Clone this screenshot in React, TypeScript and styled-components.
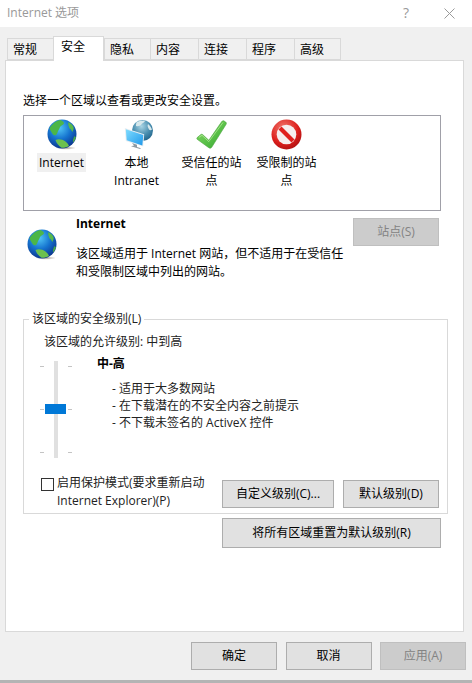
import React from 'react';
import styled, { createGlobalStyle } from 'styled-components';

const TABS = ['常规', '安全', '隐私', '内容', '连接', '程序', '高级'];
const TAB_WIDTHS = [46, 51, 46, 48, 48, 48, 47];

function GlobeIcon({ id, size = 32 }: { id: string; size?: number }) {
  return (
    <svg width={size} height={size} viewBox='0 0 32 32'>
      <defs>
        <radialGradient id={`${id}-sea`} cx='0.42' cy='0.3' r='0.75'>
          <stop offset='0' stopColor='#4fc4f5' />
          <stop offset='0.5' stopColor='#1573cf' />
          <stop offset='1' stopColor='#0a2f86' />
        </radialGradient>
        <radialGradient id={`${id}-shade`} cx='0.5' cy='0.5' r='0.5'>
          <stop offset='0' stopColor='#6b5a4a' stopOpacity='0.6' />
          <stop offset='1' stopColor='#6b5a4a' stopOpacity='0' />
        </radialGradient>
      </defs>
      <ellipse cx='20' cy='30' rx='10' ry='1.800' fill={`url(#${id}-shade)`} />
      <g transform='translate(0.5 1)'>
        <circle cx='15.500' cy='15' r='14.500' fill={`url(#${id}-sea)`} />
        <path d='M6 5.500C8 3 11 1.500 14 1c2 1 3.500 2 3.500 3.500-1 2-3 1.500-4 3.500-.5 2.500-2 3-2.500 5.500C10 16.500 8 17 6.500 15.500 5 13 3.500 11 3 9.500 3.500 8 5 6.500 6 5.500Z' fill='#4cb648' />
        <path d='M22 3c2.500 1.500 4 3 5 5 .5 2-.5 3.500-1 5-1-1-1.500-3-3-3.500-.5-2-2-4-1-6.500Z' fill='#58b84a' />
        <path d='M9 21c3-1.500 7-.5 10 1.500 2 1.500 3 3 3.500 4.500-2 1.200-5 2-7.500 1.800-2.500-2-5-4-6-7.800Z' fill='#6cc04e' />
        <path d='M28 17c.7 1 1 .8 1.500 1-.5 2-1.500 4-3 5.500-.5-2 .5-4.500 1.500-6.500Z' fill='#4aa848' />
      </g>
    </svg>
  );
}

function IntranetIcon() {
  return (
    <svg width={32} height={32} viewBox='0 0 32 32'>
      <defs>
        <radialGradient id='lan-globe' cx='0.45' cy='0.3' r='0.75'>
          <stop offset='0' stopColor='#a8d4e4' />
          <stop offset='0.55' stopColor='#4a8fb0' />
          <stop offset='1' stopColor='#1d5f86' />
        </radialGradient>
        <linearGradient id='lan-screen' x1='0' y1='0' x2='1' y2='1'>
          <stop offset='0' stopColor='#7fdcff' />
          <stop offset='1' stopColor='#1f98ea' />
        </linearGradient>
      </defs>
      <circle cx='21.500' cy='12.500' r='10.500' fill='url(#lan-globe)' />
      <path d='M16 4c3-1.500 6-1.500 8-1-1 2-3 2-4 4-1 1-3 1.500-5 1 0-2 0-3 1-4ZM27 6c2 1.500 3 3.500 4 5.500-1 1-2 1-3 0-1-2-2-3.500-1-5.500Z' fill='#d6e8ec' />
      <path d='M3.800 10 23.200 16.200 22.200 28.500 4.800 23Z' fill='#e8eef2' />
      <path d='M4.800 11.300 22.300 17 21.300 27.500 5.700 22.300Z' fill='url(#lan-screen)' />
      <path d='M11 25 16 26.700v2.300l4 1.300-1 .7-9-2.800 3-.8Z' fill='#8d9aa3' />
    </svg>
  );
}

function CheckIcon() {
  return (
    <svg width={32} height={32} viewBox='0 0 32 32'>
      <defs>
        <linearGradient id='check-fill' x1='0' y1='0' x2='1' y2='1'>
          <stop offset='0' stopColor='#8ee06a' />
          <stop offset='1' stopColor='#2ea52c' />
        </linearGradient>
      </defs>
      <path d='M1.200 19.600 4.600 16.700c.7-.6 1.600-.6 2.200 0l6 5.600L25.800 3.500c.6-.8 1.500-1 2.300-.5l1.600 1.100c.7.500.9 1.400.4 2.200L15.700 29.300c-.7 1-2 1.200-2.900.4L1.200 21.300c-.5-.5-.5-1.200 0-1.700Z' fill='url(#check-fill)' stroke='#4aa23c' strokeWidth='0.6' />
      <path d='M3 19.300 6 17.300 12.800 23.600 27 4.500' fill='none' stroke='#c4f0a8' strokeWidth='0.900' opacity='0.7' />
    </svg>
  );
}

function BlockedIcon() {
  return (
    <svg width={32} height={32} viewBox='0 0 32 32'>
      <defs>
        <radialGradient id='stop-ring' cx='0.4' cy='0.3' r='0.8'>
          <stop offset='0' stopColor='#f27a70' />
          <stop offset='0.6' stopColor='#dc1f1c' />
          <stop offset='1' stopColor='#a50d10' />
        </radialGradient>
      </defs>
      <circle cx='15.500' cy='16.500' r='15' fill='url(#stop-ring)' />
      <circle cx='15.500' cy='16.500' r='9.800' fill='#f6eeee' />
      <path d='M7.500 11.500 10.500 8.500 23.500 21.500 20.500 24.500Z' fill='#e0201e' />
    </svg>
  );
}

export default function App() {
  return (
    <Dialog>
      <GlobalStyle />
      <TitleBar>
        <Caption>Internet 选项</Caption>
        <TitleButtons>
          <HelpMark>?</HelpMark>
          <svg width={11} height={11} viewBox='0 0 11 11'>
            <path d='M0.500 0.500 10.500 10.500M10.500 0.500 0.500 10.500' stroke='#9a9a9a' strokeWidth='1' fill='none' />
          </svg>
        </TitleButtons>
      </TitleBar>

      <TabStrip>
        {TABS.map((tab, i) => (
          <Tab key={tab} $active={i === 1} $width={TAB_WIDTHS[i]}>
            {tab}
          </Tab>
        ))}
      </TabStrip>

      <Panel>
        <Hint>选择一个区域以查看或更改安全设置。</Hint>
        <ZoneBox>
          <Zone>
            <GlobeIcon id='zone' />
            <ZoneLabel $selected>Internet</ZoneLabel>
          </Zone>
          <Zone>
            <IntranetIcon />
            <ZoneLabel>
              本地
              <br />
              Intranet
            </ZoneLabel>
          </Zone>
          <Zone>
            <CheckIcon />
            <ZoneLabel>受信任的站点</ZoneLabel>
          </Zone>
          <Zone>
            <BlockedIcon />
            <ZoneLabel>受限制的站点</ZoneLabel>
          </Zone>
        </ZoneBox>

        <InfoRow>
          <InfoIcon>
            <GlobeIcon id='info' />
          </InfoIcon>
          <InfoText>
            <InfoTitle>Internet</InfoTitle>
            <Description>该区域适用于 Internet 网站，但不适用于在受信任和受限制区域中列出的网站。</Description>
          </InfoText>
          <SiteButton disabled>站点(S)</SiteButton>
        </InfoRow>

        <Group>
          <legend>该区域的安全级别(L)</legend>
          <AllowedLevel>该区域的允许级别: 中到高</AllowedLevel>
          <LevelRow>
            <Slider>
              <Ticks>
                <i />
                <i />
                <i />
              </Ticks>
              <Track>
                <Thumb />
              </Track>
              <Ticks>
                <i />
                <i />
                <i />
              </Ticks>
            </Slider>
            <LevelText>
              <Bold>中-高</Bold>
              <Bullets>
                <li>- 适用于大多数网站</li>
                <li>- 在下载潜在的不安全内容之前提示</li>
                <li>- 不下载未签名的 ActiveX 控件</li>
              </Bullets>
            </LevelText>
          </LevelRow>
          <ProtectRow>
            <CheckBox />
            <ProtectText>
              启用保护模式(要求重新启动
              <br />
              Internet Explorer)(P)
            </ProtectText>
            <CustomButton>自定义级别(C)...</CustomButton>
            <DefaultButton>默认级别(D)</DefaultButton>
          </ProtectRow>
        </Group>
        <ResetButton>将所有区域重置为默认级别(R)</ResetButton>
      </Panel>

      <Footer>
        <FooterButton>确定</FooterButton>
        <FooterButton>取消</FooterButton>
        <FooterButton disabled>应用(A)</FooterButton>
      </Footer>
      <BottomEdge />
    </Dialog>
  );
}

const GlobalStyle = createGlobalStyle`
  html, body {
    margin: 0;
    background: #f0f0f0;
  }
  * {
    box-sizing: border-box;
  }
`;

const Dialog = styled.div`
  width: 472px;
  height: 683px;
  overflow: hidden;
  background: #f0f0f0;
  color: #000;
  font-family: 'Open Sans', 'Noto Sans CJK SC', sans-serif;
  font-size: 12px;
  line-height: 18px;
`;

const TitleBar = styled.div`
  display: flex;
  align-items: center;
  justify-content: space-between;
  height: 27px;
  padding: 0 17px 1px 7px;
  background: #fff;
`;

const Caption = styled.span`
  color: #999;
`;

const TitleButtons = styled.div`
  display: flex;
  align-items: center;
  gap: 35px;
`;

const HelpMark = styled.span`
  color: #999;
  font-size: 14px;
`;

const TabStrip = styled.div`
  display: flex;
  align-items: flex-end;
  height: 33px;
  padding-left: 7px;
`;

const Tab = styled.div<{ $active?: boolean; $width: number }>`
  position: relative;
  z-index: ${(p) => (p.$active ? 1 : 0)};
  width: ${(p) => p.$width}px;
  height: ${(p) => (p.$active ? 25 : 22)}px;
  margin-bottom: ${(p) => (p.$active ? -1 : 0)}px;
  padding-left: ${(p) => (p.$active ? 7 : 5)}px;
  background: ${(p) => (p.$active ? '#fff' : '#f0f0f0')};
  border: 1px solid #d9d9d9;
  border-bottom: ${(p) => (p.$active ? 'none' : '1px solid #d9d9d9')};
  border-right-width: ${(p) => (p.$active ? 1 : 0)}px;
  line-height: ${(p) => (p.$active ? 20 : 22)}px;

  &:last-child {
    border-right-width: 1px;
  }
`;

const Panel = styled.div`
  width: 459px;
  height: 572px;
  margin-left: 5px;
  padding: 31px 0 0 17px;
  background: #fff;
  border: 1px solid #d9d9d9;
`;

const Hint = styled.div`
  height: 18px;
  margin-bottom: 5px;
`;

const ZoneBox = styled.div`
  display: grid;
  grid-template-columns: repeat(4, 75px);
  width: 418px;
  height: 96px;
  padding-top: 2px;
  border: 1px solid #a0a0a8;
`;

const Zone = styled.div`
  display: flex;
  flex-direction: column;
  align-items: center;
  text-align: center;
`;

const ZoneLabel = styled.div<{ $selected?: boolean }>`
  width: ${(p) => (p.$selected ? '49px' : '64px')};
  height: ${(p) => (p.$selected ? '19px' : 'auto')};
  margin-top: 3px;
  padding-top: 1px;
  line-height: 17.500px;
  background: ${(p) => (p.$selected ? '#f0f0f0' : 'transparent')};
`;

const InfoRow = styled.div`
  display: flex;
  align-items: flex-start;
  width: 417px;
  margin-top: 3px;
`;

const InfoIcon = styled.div`
  width: 53px;
  padding: 14px 0 0 3px;
`;

const InfoText = styled.div`
  width: 277px;
`;

const Bold = styled.div`
  height: 18px;
  font-weight: 700;
`;

const InfoTitle = styled(Bold)`
  padding-top: 1px;
`;

const Description = styled.div`
  margin-top: 13px;
`;

const Button = styled.button`
  display: flex;
  align-items: center;
  justify-content: center;
  padding: 0;
  font: inherit;
  color: #000;
  background: #e1e1e1;
  border: 1px solid #adadad;

  &:disabled {
    color: #838383;
    background: #ccc;
    border-color: #bfbfbf;
  }
`;

const SiteButton = styled(Button)`
  flex: none;
  width: 86px;
  height: 28px;
  margin-top: 4px;
`;

const Group = styled.fieldset`
  width: 425px;
  height: 204px;
  margin: 29px 0 0;
  padding: 0 0 0 16px;
  border: 1px solid #d9d9d9;

  legend {
    height: 18px;
    margin-left: -11px;
    padding: 0 3px;
    color: #222;
  }
`;

const AllowedLevel = styled.div`
  height: 18px;
  margin: 5px 0 0 4px;
  color: #222;
`;

const LevelRow = styled.div`
  display: flex;
  align-items: flex-start;
  height: 118px;
  margin-top: 4px;
`;

const Slider = styled.div`
  display: flex;
  justify-content: space-between;
  flex: none;
  width: 32px;
  height: 97px;
  margin-top: 6px;
`;

const Ticks = styled.div`
  display: flex;
  flex-direction: column;
  justify-content: space-between;
  width: 4px;
  padding: 5px 0;

  i {
    display: block;
    height: 1px;
    background: #c4c4c4;
  }
`;

const Track = styled.div`
  position: relative;
  width: 4px;
  background: #e0e0e0;
`;

const Thumb = styled.div`
  position: absolute;
  top: 43px;
  left: -9px;
  width: 21px;
  height: 10px;
  background: #0078d7;
`;

const LevelText = styled.div`
  margin-left: 25px;
`;

const Bullets = styled.ul`
  margin: 7px 0 0 15px;
  padding: 0;
  list-style: none;
  line-height: 17px;
  color: #222;
`;

const ProtectRow = styled.div`
  display: flex;
  align-items: flex-start;
`;

const CheckBox = styled.div`
  flex: none;
  width: 13px;
  height: 13px;
  margin: 5px 3px 0 1px;
  background: #fff;
  border: 1px solid #333;
`;

const ProtectText = styled.div`
  width: 165px;
  padding-top: 1px;
  color: #222;
`;

const CustomButton = styled(Button)`
  width: 112px;
  height: 28px;
  margin-top: 7px;
`;

const DefaultButton = styled(Button)`
  width: 96px;
  height: 28px;
  margin: 7px 0 0 9px;
`;

const ResetButton = styled(Button)`
  width: 219px;
  height: 30px;
  margin: 4px 0 0 199px;
`;

const Footer = styled.div`
  display: flex;
  justify-content: flex-end;
  gap: 8.500px;
  height: 48px;
  padding: 10px 6px 0 0;
`;

const FooterButton = styled(Button)`
  width: 86px;
  height: 28px;
`;

const BottomEdge = styled.div`
  height: 3px;
  background: #b4b4b4;
`;
